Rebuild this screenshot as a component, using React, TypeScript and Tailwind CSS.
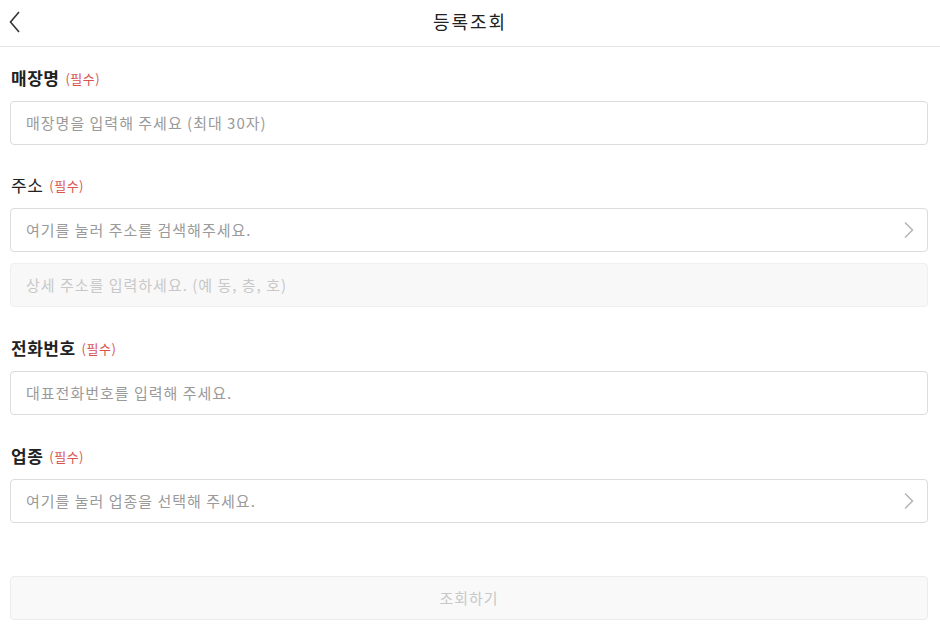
import React from "react";

const font = { fontFamily: '"Noto Sans CJK KR", "Noto Sans", sans-serif' };

function Label({ text, bold = true }: { text: string; bold?: boolean }) {
  return (
    <div className="flex items-end h-[22px] mb-[12px] ml-[11px]">
      <span className={`text-[17px] leading-[22px] tracking-[0.5px] text-[#222] ${bold ? "font-bold" : "font-normal"}`}>{text}</span>
      <span className="ml-[6px] text-[13px] leading-[20px] tracking-[0.5px] text-[#d9534f]">(필수)</span>
    </div>
  );
}

function Chevron() {
  return (
    <svg width="12" height="18" viewBox="0 0 12 18" className="shrink-0">
      <path d="M2 1.5 L9.5 9 L2 16.5" fill="none" stroke="#b5b5b5" strokeWidth="1.5" />
    </svg>
  );
}

function Field({ placeholder, chevron = false, disabled = false }: { placeholder: string; chevron?: boolean; disabled?: boolean }) {
  return (
    <div
      className={`ml-[10px] mr-[12px] h-[44px] rounded-[4px] border flex items-center pl-[15px] pr-[12px] ${
        disabled ? "bg-[#f8f8f8] border-[#efefef]" : "bg-white border-[#dcdcdc]"
      }`}
    >
      <span className={`flex-1 text-[15px] tracking-[1px] ${disabled ? "text-[#c8c8c8]" : "text-[#9a9a9a]"}`}>{placeholder}</span>
      {chevron && <Chevron />}
    </div>
  );
}

export default function App() {
  return (
    <div className="w-[940px] h-[632px] bg-white overflow-hidden" style={font}>
      <div className="relative h-[47px] border-b border-[#e6e6e6] flex items-center justify-center">
        <svg width="14" height="22" viewBox="0 0 14 22" className="absolute left-[8px] top-[11px]">
          <path d="M11 1 L2.5 11 L11 21" fill="none" stroke="#333" strokeWidth="1.6" />
        </svg>
        <span className="text-[18px] text-[#222] leading-[24px] tracking-[2px] -mt-[4px]">등록조회</span>
      </div>

      <div className="pt-[20px]">
        <Label text="매장명" />
        <Field placeholder="매장명을 입력해 주세요 (최대 30자)" />

        <div className="h-[29px]" />
        <Label text="주소" bold={false} />
        <Field placeholder="여기를 눌러 주소를 검색해주세요." chevron />
        <div className="h-[11px]" />
        <Field placeholder="상세 주소를 입력하세요. (예 동, 층, 호)" disabled />

        <div className="h-[30px]" />
        <Label text="전화번호" />
        <Field placeholder="대표전화번호를 입력해 주세요." />

        <div className="h-[30px]" />
        <Label text="업종" />
        <Field placeholder="여기를 눌러 업종을 선택해 주세요." chevron />

        <div className="h-[53px]" />
        <div className="ml-[10px] mr-[12px] h-[44px] rounded-[4px] border border-[#ececec] bg-[#f9f9f9] flex items-center justify-center">
          <span className="text-[15px] tracking-[1px] text-[#c8c8c8]">조회하기</span>
        </div>
      </div>
    </div>
  );
}
